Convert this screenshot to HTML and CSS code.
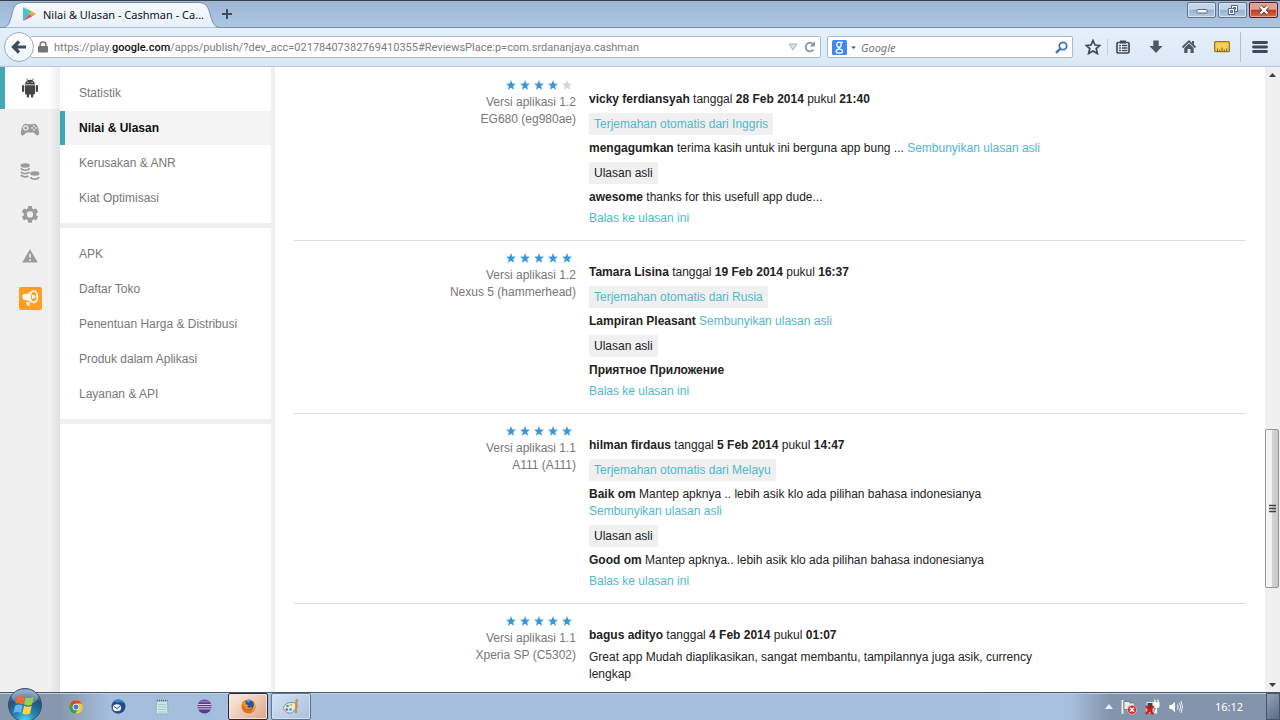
FILE: index.html
```html
<!DOCTYPE html>
<html lang="id">
<head>
<meta charset="utf-8">
<title>Nilai &amp; Ulasan - Cashman</title>
<link rel="stylesheet" href="styles.css">
</head>
<body>
<svg class="defs" aria-hidden="true">
  <defs>
    <symbol id="star" viewBox="0 0 10 10"><path d="M5 0 6.300 3.500 10 3.800 7.100 6.100 8.100 9.800 5 7.700 1.900 9.800 2.900 6.100 0 3.800 3.700 3.500z"/></symbol>
  </defs>
</svg>

<header class="titlebar">
  <div class="tab">
    <svg class="tab-shape" viewBox="0 0 224 26" preserveAspectRatio="none" aria-hidden="true">
      <defs><linearGradient id="tabfill" x1="0" y1="0" x2="0" y2="1"><stop offset="0" stop-color="#f6faff"/><stop offset="1" stop-color="#e6f0fb"/></linearGradient></defs>
      <path d="M0 26C9 26 10 20 12 12 14 4 16 .5 24 .5H200C208 .5 210 5 212 12 214 20 216 26 224 26z" fill="url(#tabfill)" stroke="#738eaf"/>
    </svg>
    <svg class="tab-icon" width="14" height="14" viewBox="0 0 14 14" aria-hidden="true"><path d="M1 0v14l6.500-7z" fill="#3fc3d8"/><path d="M1 0l9 4.600-2.500 2.400z" fill="#5ec07c"/><path d="M1 14l9-4.600L7.500 7z" fill="#e8435a"/><path d="M10 4.600 14 7l-4 2.400L7.500 7z" fill="#f3a33c"/></svg>
    <span class="tab-title">Nilai &amp; Ulasan - Cashman - Ca...</span>
  </div>
  <button class="new-tab" aria-label="New tab"><svg width="10" height="10" viewBox="0 0 10 10"><path d="M5 0v10M0 5h10" stroke="#3e4b5b" stroke-width="2"/></svg></button>
  <div class="window-buttons">
    <button class="win" aria-label="Minimize"><svg width="14" height="12" viewBox="0 0 14 12"><rect x="2" y="5.500" width="10" height="3.500" rx=".5" fill="#fff" stroke="#56657c"/></svg></button>
    <button class="win" aria-label="Restore"><svg width="14" height="12" viewBox="0 0 14 12"><g fill="#fff" stroke="#56657c"><path d="M5.500 1.500h6v6h-6z"/><path d="M7.500 3.500h2v2h-2z" fill="#8fa9c8"/><path d="M2.500 4.500h6v6h-6z"/><path d="M4.500 6.500h2v2h-2z" fill="#8fa9c8"/></g></svg></button>
    <button class="win win-close" aria-label="Close"><svg width="14" height="12" viewBox="0 0 14 12"><path d="M3.500 2.500l7 7M10.500 2.500l-7 7" stroke="#6b3a3c" stroke-width="4.200"/><path d="M3.500 2.500l7 7M10.500 2.500l-7 7" stroke="#fff" stroke-width="2.400"/></svg></button>
  </div>
</header>

<div class="toolbar">
  <button class="back" aria-label="Back"><svg width="16" height="14" viewBox="0 0 16 14"><path d="M8 1.500 2.500 7 8 12.500M3 7h12" fill="none" stroke="#3e4b5b" stroke-width="3.200"/></svg></button>
  <div class="url-box">
    <svg width="10" height="12" viewBox="0 0 10 12" aria-hidden="true"><path d="M2.200 6V3.500a2.800 2.500 0 0 1 5.600 0V6" fill="none" stroke="#7b7b7b" stroke-width="1.600"/><rect y="5" width="10" height="6.500" rx="1" fill="#757575"/></svg>
    <div class="url" role="textbox" contenteditable="true" spellcheck="false" aria-label="Address">https://play.<b>google.com</b>/apps/publish/?dev_acc=02178407382769410355#ReviewsPlace:p=com.srdananjaya.cashman</div>
    <button class="plain" aria-label="Show history"><svg width="10" height="8" viewBox="0 0 10 8"><path d="M1 1h8L5 7z" fill="#dde2e7" stroke="#a9b2bb"/></svg></button>
    <button class="plain" aria-label="Reload"><svg width="12" height="12" viewBox="0 0 12 12"><path d="M9.500 8.500A4.300 4.300 0 1 1 9 3" fill="none" stroke="#8f9aa5" stroke-width="1.800"/><path d="M11 0v5.500H5.800z" fill="#8f9aa5"/></svg></button>
  </div>
  <div class="search-box">
    <button class="plain" aria-label="Search engine"><svg width="24" height="15" viewBox="0 0 24 15"><rect width="15" height="15" rx="1.500" fill="#4285f4"/><g fill="none" stroke="#fff" stroke-width="1.300"><ellipse cx="7" cy="4.700" rx="2.200" ry="2.500"/><path d="M8 2.400h3M8.500 7C5.500 8 7 8.700 8.800 9.500M7.200 9.200c-4 .2-4.200 4 .2 4 4 0 4-2.800 1.400-3.800"/></g><path d="M19 6.500h5l-2.500 2.500z" fill="#555"/></svg></button>
    <input class="search-input" type="text" placeholder="Google" aria-label="Search">
    <button class="plain" aria-label="Search"><svg width="13" height="13" viewBox="0 0 13 13"><circle cx="8" cy="5" r="3.700" fill="none" stroke="#3c76b4" stroke-width="1.800"/><path d="M5.300 7.700 1 12" stroke="#3c76b4" stroke-width="2.400"/></svg></button>
  </div>
  <div class="tools">
    <button class="plain tool" aria-label="Bookmark"><svg width="16" height="16" viewBox="0 0 16 16"><path d="M8 1.500 10 6l4.800.4-3.600 3.200 1.200 4.900L8 11.900l-4.400 2.600 1.200-4.900L1.200 6.400 6 6z" fill="none" stroke="#3f4a58" stroke-width="1.700"/></svg></button>
    <span class="sep-small"></span>
    <button class="plain tool" aria-label="Bookmarks list"><svg width="16" height="16" viewBox="0 0 16 16"><rect x="2" y="3.500" width="12" height="10.500" rx="1.200" fill="#fff" stroke="#3f4a58" stroke-width="1.700"/><path d="M5 1.500h6v3H5z" fill="#3f4a58"/><path d="M4 6.500h2M7 6.500h5.500M4 9h2M7 9h5.500M4 11.500h2M7 11.500h5.500" stroke="#3f4a58" stroke-width="1.300"/></svg></button>
    <button class="plain tool" aria-label="Downloads"><svg width="16" height="16" viewBox="0 0 16 16"><path d="M5.300 1.500h5.400V7H14.500L8 14 1.500 7h3.800z" fill="#4c5764"/></svg></button>
    <button class="plain tool" aria-label="Home"><svg width="16" height="16" viewBox="0 0 16 16"><path d="M1.500 8.500 8 2.200l6.500 6.300" fill="none" stroke="#4c5764" stroke-width="1.800"/><path d="M3.300 9 8 4.500 12.700 9v5H9.500v-4h-3v4H3.300zM11 2h2v4l-2-2z" fill="#4c5764"/></svg></button>
    <button class="plain tool" aria-label="Measure"><svg width="16" height="16" viewBox="0 0 16 16"><rect x=".7" y="2.700" width="14.600" height="10" rx="1" fill="#f6cf58" stroke="#9a7420" stroke-width="1.300"/><path d="M3.500 12.500v-3M5.800 12.500v-2M8 12.500v-4M10.300 12.500v-2M12.600 12.500v-3" stroke="#84621a"/></svg></button>
    <span class="sep-tall"></span>
    <button class="plain tool" aria-label="Menu"><svg width="16" height="14" viewBox="0 0 16 14"><path d="M1.500 2.500h13M1.500 7h13M1.500 11.500h13" stroke="#3f4a58" stroke-width="2.800" stroke-linecap="round"/></svg></button>
  </div>
</div>

<div class="page">
  <nav class="rail" aria-label="Konsol">
    <a class="rail-item rail-active" href="#" aria-label="Aplikasi"><svg width="16" height="20" viewBox="0 0 16 20"><g fill="#454545"><path d="M3 6.500a5 4.700 0 0 1 10 0zM3 7.200h10v8.300a1 1 0 0 1-1 1H4a1 1 0 0 1-1-1z"/><rect y="7" width="2.200" height="7" rx="1.100"/><rect x="13.800" y="7" width="2.200" height="7" rx="1.100"/><rect x="4.700" y="14" width="2.400" height="5.500" rx="1"/><rect x="8.900" y="14" width="2.400" height="5.500" rx="1"/></g><path d="M4.500.5l1.300 2M11.500.5l-1.300 2" stroke="#454545" stroke-width=".8"/><circle cx="6" cy="4.500" r=".6" fill="#fff"/><circle cx="10" cy="4.500" r=".6" fill="#fff"/></svg></a>
    <a class="rail-item" href="#" aria-label="Game"><svg width="20" height="14" viewBox="0 0 20 14"><path d="M5 .8C6.500.3 7 1.300 8 1.300h4c1 0 1.500-1 3-.5 2.500.8 3.800 5.500 4.200 9 .3 2.700-2 3.500-3.300 2L13.500 9.500h-7L4.100 11.800c-1.300 1.500-3.600.7-3.300-2C1.200 6.300 2.500 1.600 5 .8z" fill="#9b9b9b"/><circle cx="5.800" cy="5" r="2.100" fill="#9b9b9b" stroke="#f0f0f0" stroke-width="1.200"/><g fill="#f0f0f0"><circle cx="14" cy="2.900" r=".9"/><circle cx="14" cy="6.800" r=".9"/><circle cx="12.100" cy="4.900" r=".9"/><circle cx="15.900" cy="4.900" r=".9"/></g></svg></a>
    <a class="rail-item" href="#" aria-label="Keuangan"><svg width="20" height="18" viewBox="0 0 20 18"><g fill="#9b9b9b"><ellipse cx="5.200" cy="2.500" rx="4.600" ry="2.200"/><ellipse cx="14.800" cy="10.500" rx="4.600" ry="2.200"/></g><g fill="none" stroke="#9b9b9b" stroke-width="1.700"><path d="M1 5.300c1 2.600 7.400 2.600 8.400 0M1 8.700c1 2.600 7.400 2.600 8.400 0M1 12c1 2 5.500 2.400 7.400 1M10.600 14c1 2.800 7.400 2.800 8.400 0"/></g></svg></a>
    <a class="rail-item" href="#" aria-label="Setelan"><svg width="18" height="18" viewBox="0 0 23 23"><path fill="#9b9b9b" d="M19.400 13a7.800 7.800 0 0 0 0-2l2.300-1.700a.6.600 0 0 0 .1-.7l-2.200-3.700a.6.600 0 0 0-.7-.3l-2.600 1.100a8 8 0 0 0-1.800-1L14 1.900a.6.600 0 0 0-.5-.5h-4a.6.600 0 0 0-.5.500l-.5 2.800a8 8 0 0 0-1.800 1L4.100 4.600a.6.600 0 0 0-.7.300L1.300 8.600a.6.600 0 0 0 .1.700L3.700 11a7.800 7.800 0 0 0 0 2l-2.300 1.700a.6.600 0 0 0-.1.700l2.100 3.700c.1.300.4.400.7.300l2.600-1.100a8 8 0 0 0 1.800 1l.5 2.800c0 .3.200.5.500.5h4c.3 0 .5-.2.500-.5l.5-2.800a8 8 0 0 0 1.800-1l2.600 1.100c.3.100.6 0 .7-.3l2.200-3.700a.6.600 0 0 0-.1-.7zM11.500 16a4 4 0 1 1 0-8 4 4 0 0 1 0 8z"/></svg></a>
    <a class="rail-item" href="#" aria-label="Peringatan"><svg width="16" height="14" viewBox="0 0 16 14"><path d="M8 .2 15.800 13.500H.2z" fill="#9b9b9b"/><path d="M8 4.800v4M8 10.200v1.800" stroke="#f0f0f0" stroke-width="1.600"/></svg></a>
    <a class="rail-item" href="#" aria-label="Pengumuman"><svg width="23" height="23" viewBox="0 0 23 23"><rect width="23" height="23" rx="2" fill="#ff9d25"/><path d="M3.500 8.500C3.500 7 5 7 8 7l5-3.200v12L8 13H5c-1.500-.5-1.500-3-1.500-4.500zM7 14.500l4 1-.5 3.500L8 18z" fill="#fff"/><ellipse cx="14.700" cy="9.800" rx="3.600" ry="5.600" fill="#ff9d25" stroke="#fff" stroke-width="1.800"/><path d="M13 8h1.500a1.800 1.800 0 0 1 0 3.600H13z" fill="#fff"/></svg></a>
  </nav>

  <nav class="menu" aria-label="Menu aplikasi">
    <div class="menu-group">
      <a class="menu-item" href="#">Statistik</a>
      <a class="menu-item menu-active" href="#">Nilai &amp; Ulasan</a>
      <a class="menu-item" href="#">Kerusakan &amp; ANR</a>
      <a class="menu-item" href="#">Kiat Optimisasi</a>
    </div>
    <div class="menu-group">
      <a class="menu-item" href="#">APK</a>
      <a class="menu-item" href="#">Daftar Toko</a>
      <a class="menu-item" href="#">Penentuan Harga &amp; Distribusi</a>
      <a class="menu-item" href="#">Produk dalam Aplikasi</a>
      <a class="menu-item" href="#">Layanan &amp; API</a>
    </div>
  </nav>

  <main class="reviews">
    <article class="review">
      <div class="meta">
        <div class="stars" role="img" aria-label="4 dari 5"><svg><use href="#star"/></svg><svg><use href="#star"/></svg><svg><use href="#star"/></svg><svg><use href="#star"/></svg><svg class="off"><use href="#star"/></svg></div>
        <div>Versi aplikasi 1.2</div>
        <div>EG680 (eg980ae)</div>
      </div>
      <div class="body">
        <p><b>vicky ferdiansyah</b> tanggal <b>28 Feb 2014</b> pukul <b>21:40</b></p>
        <a class="tag" href="#">Terjemahan otomatis dari Inggris</a>
        <p><b>mengagumkan</b> terima kasih untuk ini berguna app bung ... <a class="toggle" href="#">Sembunyikan ulasan asli</a></p>
        <span class="tag">Ulasan asli</span>
        <p><b>awesome</b> thanks for this usefull app dude...</p>
        <a class="reply" href="#">Balas ke ulasan ini</a>
      </div>
    </article>
    <article class="review">
      <div class="meta">
        <div class="stars" role="img" aria-label="5 dari 5"><svg><use href="#star"/></svg><svg><use href="#star"/></svg><svg><use href="#star"/></svg><svg><use href="#star"/></svg><svg><use href="#star"/></svg></div>
        <div>Versi aplikasi 1.2</div>
        <div>Nexus 5 (hammerhead)</div>
      </div>
      <div class="body">
        <p><b>Tamara Lisina</b> tanggal <b>19 Feb 2014</b> pukul <b>16:37</b></p>
        <a class="tag" href="#">Terjemahan otomatis dari Rusia</a>
        <p><b>Lampiran Pleasant</b> <a class="toggle" href="#">Sembunyikan ulasan asli</a></p>
        <span class="tag">Ulasan asli</span>
        <p><b>Приятное Приложение</b></p>
        <a class="reply" href="#">Balas ke ulasan ini</a>
      </div>
    </article>
    <article class="review">
      <div class="meta">
        <div class="stars" role="img" aria-label="5 dari 5"><svg><use href="#star"/></svg><svg><use href="#star"/></svg><svg><use href="#star"/></svg><svg><use href="#star"/></svg><svg><use href="#star"/></svg></div>
        <div>Versi aplikasi 1.1</div>
        <div>A111 (A111)</div>
      </div>
      <div class="body">
        <p><b>hilman firdaus</b> tanggal <b>5 Feb 2014</b> pukul <b>14:47</b></p>
        <a class="tag" href="#">Terjemahan otomatis dari Melayu</a>
        <p><b>Baik om</b> Mantep apknya .. lebih asik klo ada pilihan bahasa indonesianya <a class="toggle" href="#">Sembunyikan ulasan asli</a></p>
        <span class="tag">Ulasan asli</span>
        <p><b>Good om</b> Mantep apknya.. lebih asik klo ada pilihan bahasa indonesianya</p>
        <a class="reply" href="#">Balas ke ulasan ini</a>
      </div>
    </article>
    <article class="review">
      <div class="meta">
        <div class="stars" role="img" aria-label="5 dari 5"><svg><use href="#star"/></svg><svg><use href="#star"/></svg><svg><use href="#star"/></svg><svg><use href="#star"/></svg><svg><use href="#star"/></svg></div>
        <div>Versi aplikasi 1.1</div>
        <div>Xperia SP (C5302)</div>
      </div>
      <div class="body">
        <p><b>bagus adityo</b> tanggal <b>4 Feb 2014</b> pukul <b>01:07</b></p>
        <p>Great app Mudah diaplikasikan, sangat membantu, tampilannya juga asik, currency lengkap</p>
      </div>
    </article>
  </main>

  <div class="scrollbar">
    <button class="scroll-btn" aria-label="Scroll up"><svg width="7" height="4" viewBox="0 0 7 4"><path d="M0 4 3.500 0 7 4z" fill="#404040"/></svg></button>
    <span class="space-above"></span>
    <span class="thumb"><svg width="7" height="9" viewBox="0 0 7 9"><path d="M0 1.500h7M0 4.500h7M0 7.500h7" stroke="#444" stroke-width="1.400"/></svg></span>
    <span class="space-below"></span>
    <button class="scroll-btn" aria-label="Scroll down"><svg width="7" height="4" viewBox="0 0 7 4"><path d="M0 0h7L3.500 4z" fill="#404040"/></svg></button>
  </div>
</div>

<footer class="taskbar">
  <button class="start" aria-label="Start"><svg width="36" height="34" viewBox="0 0 36 34">
    <defs><radialGradient id="orb" cx=".5" cy="1" r=".95"><stop offset="0" stop-color="#4fe0f4"/><stop offset=".35" stop-color="#2489b8"/><stop offset=".75" stop-color="#24507c"/><stop offset="1" stop-color="#6f93b3"/></radialGradient></defs>
    <circle cx="18" cy="17" r="16.500" fill="url(#orb)" stroke="#34506d"/><ellipse cx="18" cy="9" rx="13" ry="7.500" fill="#fff" opacity=".3"/>
    <path d="M10 9c3-1.800 5-1.600 7.500-.3L16 16c-2.500-1.300-5-1.300-7.500 0z" fill="#f06a35"/><path d="M18.700 9.200c2.800 1.300 5 1 8-.3L25 16.500c-2.800 1.300-5 1.200-7.700 0z" fill="#9ccc48"/><path d="M8.200 17.500c2.700-1.300 5-1.200 7.500 0L14 25c-2.500-1.300-4.800-1.300-7.500 0z" fill="#67b5ef"/><path d="M17 17.700c2.700 1.300 5 1.200 7.700.2L23 25.500c-2.700 1.200-5 1.200-7.700 0z" fill="#ffd24b"/>
  </svg></button>
  <div class="launchers">
    <button class="plain launch" aria-label="Chrome"><svg width="14" height="14" viewBox="0 0 14 14"><circle cx="7" cy="7" r="6.800" fill="#f8ca33"/><path d="M1.100 3.600A6.800 6.800 0 0 1 12.900 3.600H7L4 8.500z" fill="#dc4437"/><path d="M1.100 3.600A6.800 6.800 0 0 0 6.300 13.800L9.600 8.500H4z" fill="#2fa352"/><circle cx="7" cy="7" r="3.300" fill="#fff"/><circle cx="7" cy="7" r="2.500" fill="#3d7de0"/></svg></button>
    <button class="plain launch" aria-label="Thunderbird"><svg width="15" height="15" viewBox="0 0 15 15"><circle cx="7.500" cy="7.500" r="7" fill="#244b83"/><path d="M2 2.500C6-1 12 .5 14 5c-3-2.500-5-2-7-1.500z" fill="#3f86c6"/><ellipse cx="6" cy="8.800" rx="4.200" ry="3.500" fill="#eef2f6"/><path d="M3 7.500l3 2 3.500-2.700M1 10c1 4 6 5 9 3" fill="none" stroke="#35537b"/></svg></button>
    <button class="plain launch" aria-label="Notepad"><svg width="14" height="16" viewBox="0 0 14 16"><path d="M1.500 2h11l.5 13H1z" fill="#c6e8ea" stroke="#8fabac" stroke-width=".8"/><path d="M2 1.500h10.500" stroke="#526c70" stroke-width="1.600" stroke-dasharray="1 1"/><path d="M3 5.500h8M3 8h8M3 10.500h8M3 13h8" stroke="#98c6cc" stroke-width=".8"/></svg></button>
    <button class="plain launch" aria-label="Eclipse"><svg width="15" height="15" viewBox="0 0 15 15"><circle cx="7.500" cy="7.500" r="7" fill="#5b3c86"/><path d="M.8 5.500h13.400M.5 7.700h14M.8 9.900h13.400" stroke="#d9cdea" stroke-width="1"/><path d="M2 3.500c3-3 8-3 11 0z" fill="#8d72b4"/></svg></button>
    <div class="tasks">
      <button class="task task-active" aria-label="Firefox"><svg width="15" height="15" viewBox="0 0 15 15"><circle cx="7.500" cy="7.500" r="7" fill="#e66b1d"/><circle cx="7.800" cy="6" r="5" fill="#23549c"/><path d="M5 2c1-1.500 4-2 6-.5-2 0-3 1-3 2z" fill="#53a5dc"/><path d="M1 4c.5-1 1-2 1.800-2.500.2 1 1 1.500 2.200 1.500L4.500 5l3 1.200C6 7 6 8 7 8.500c2 .8 3-1 4.500 0C10 11 5.500 11.500 3.500 8.500z" fill="#f6921e"/><path d="M13 3.500c2 4 0 8-3 9.500 2-2.500 3-4 3-9.500z" fill="#fbc638"/></svg></button>
      <button class="task" aria-label="Paint"><svg width="16" height="16" viewBox="0 0 16 16"><path d="M2 6c3-3.500 10-3.500 12 0 1 4-3 4-3.500 6S7 15 3.500 13 0 8 2 6z" fill="#d9edf7" stroke="#5794b9" stroke-width=".9"/><circle cx="4.500" cy="7" r="1.300" fill="#46a84f"/><circle cx="8" cy="5.700" r="1.300" fill="#e7bf30"/><circle cx="3.800" cy="10.500" r="1.300" fill="#d9463b"/><circle cx="7.500" cy="10.500" r="1.500" fill="#5fa1d4"/><path d="M13.500 1.500 12.800 14" stroke="#df8a25" stroke-width="2.200"/><path d="M12.700 0h2.300v3.500h-2.300z" fill="#c69a5e"/></svg></button>
    </div>
  </div>
  <div class="tray">
    <button class="plain" aria-label="Show hidden icons"><svg width="8" height="5" viewBox="0 0 8 5"><path d="M0 5 4 0l4 5z" fill="#edf2f8"/></svg></button>
    <button class="plain" aria-label="Action Center"><svg width="16" height="16" viewBox="0 0 16 16"><path d="M1.500 1v14" stroke="#f4f4f4" stroke-width="1.800"/><path d="M3 2.500h5l1 1.500h4.500v6.500H3z" fill="#e8ecef" stroke="#5a6878" stroke-width=".7"/><circle cx="11" cy="10.800" r="4.600" fill="#d92f2c" stroke="#f2dada" stroke-width=".6"/><path d="M9 8.800l4 4M13 8.800l-4 4" stroke="#fff" stroke-width="1.500"/></svg></button>
    <button class="plain" aria-label="Battery"><svg width="15" height="16" viewBox="0 0 15 16"><path d="M2 3.500h6v10H2z" fill="#4b3e47" stroke="#eee"/><path d="M10 .5v3M13 .5v3" stroke="#fff" stroke-width="1.300"/><path d="M8.500 3.500H14V7c0 2-5.500 2-5.500 0zM11.500 8v6H9" fill="#fff" stroke="#eee" stroke-width="1.200"/><path d="M1 7l7 8M8.500 7 1 15" stroke="#e21414" stroke-width="2.400"/></svg></button>
    <button class="plain" aria-label="Volume"><svg width="15" height="14" viewBox="0 0 15 14"><path d="M.8 4.500h2.700L7.500.8v12.400L3.500 9.500H.8z" fill="#f5f7f9" stroke="#65738a" stroke-width=".6"/><path d="M9.300 4.500q1.600 2.500 0 5M11.300 2.700q2.700 4.300 0 8.600M13 1q3 6 0 12" fill="none" stroke="#f0f3f7"/></svg></button>
    <time class="clock">16:12</time>
    <button class="show-desktop" aria-label="Show desktop"></button>
  </div>
</footer>
</body>
</html>
```
FILE: styles.css
```css
* { box-sizing: border-box; }

body {
  margin: 0;
  height: 100vh;
  display: flex;
  flex-direction: column;
  overflow: hidden;
  font-family: "Liberation Sans", Arial, sans-serif;
  font-size: 12px;
  line-height: 17px;
  color: #222;
  background: #fff;
}

button { font: inherit; padding: 0; margin: 0; }
svg { display: block; flex: none; }
a { color: #4fb8ca; text-decoration: none; }
p { margin: 0; }
.defs { position: absolute; width: 0; height: 0; }

.plain {
  display: flex;
  align-items: center;
  justify-content: center;
  border: 0;
  background: none;
}

/* Window title bar */
.titlebar {
  flex: none;
  display: flex;
  height: 28px;
  border-top: 1px solid #3a3f48;
  border-bottom: 1px solid #738eaf;
  background: linear-gradient(#9bb6d5, #aec6e1);
  font-family: "Noto Sans", "Open Sans", sans-serif;
}
.tab {
  position: relative;
  display: flex;
  align-items: center;
  gap: 7px;
  width: 222px;
  padding-left: 22px;
  color: #111;
  font-size: 11px;
}
.tab-shape {
  position: absolute;
  left: 0;
  top: 1px;
  width: 100%;
  height: 26px;
}
.tab-icon, .tab-title { position: relative; white-space: nowrap; }
.new-tab {
  display: flex;
  align-items: center;
  border: 0;
  background: none;
}
.window-buttons {
  display: flex;
  align-items: flex-start;
  gap: 2px;
  margin-left: auto;
  padding: 1px 2px 0 0;
}
.win {
  display: flex;
  align-items: center;
  justify-content: center;
  width: 29px;
  height: 16px;
  border: 1px solid #5d738f;
  border-radius: 2px;
  background: linear-gradient(#c4d5e9 45%, #96b2d1 50%, #b5cbe4);
  box-shadow: inset 0 0 0 1px #d6e3f1;
}
.win-close {
  border-color: #5b2026;
  background: linear-gradient(#e0a093 45%, #bf3a22 50%, #cf6a50);
  box-shadow: inset 0 0 0 1px #e5a79b;
}

/* Navigation toolbar */
.toolbar {
  flex: none;
  display: flex;
  align-items: center;
  height: 39px;
  padding: 0 4px;
  border-bottom: 1px solid #b6c8dc;
  background: linear-gradient(#e6f0fb, #dae8f6);
}
.back {
  z-index: 1;
  display: flex;
  align-items: center;
  justify-content: center;
  width: 30px;
  height: 30px;
  border: 1px solid #9aabbd;
  border-radius: 50%;
  background: linear-gradient(#fff, #eef5fc);
}
.url-box, .search-box {
  display: flex;
  align-items: center;
  height: 22px;
  border: 1px solid #a9bacb;
  border-radius: 2px;
  background: #fff;
}
.url-box {
  flex: 1;
  min-width: 0;
  margin-left: -4px;
  padding: 0 4px 0 7px;
  gap: 6px;
}
.url {
  flex: 1;
  min-width: 0;
  overflow: hidden;
  white-space: nowrap;
  color: #7b7b7b;
  font-family: Roboto, "Open Sans", sans-serif;
  font-size: 11px;
  outline: 0;
}
.url b { color: #111; font-weight: 500; }
.search-box {
  width: 246px;
  margin-left: 6px;
  padding: 0 4px;
  gap: 5px;
}
.search-input {
  flex: 1;
  min-width: 0;
  padding: 0;
  border: 0;
  outline: 0;
  font: italic 11px "Noto Sans", "Open Sans", sans-serif;
}
.search-input::placeholder { color: #777; }
.tools {
  display: flex;
  align-items: center;
  padding-left: 3px;
}
.tool { width: 33px; height: 24px; }
.sep-small { width: 1px; height: 16px; margin: 0 -2px; background: #c0cddb; }
.sep-tall { width: 1px; height: 30px; margin: 0 2px; background: #aebfd1; }

/* Page */
.page {
  flex: 1;
  min-height: 0;
  display: flex;
  background: #f0f0f0;
}
.rail {
  flex: none;
  width: 60px;
  background: linear-gradient(90deg, #f0f0f0 50px, #dfdfdf);
}
.rail-item {
  display: flex;
  align-items: center;
  justify-content: center;
  height: 42px;
}
.rail-active {
  border-left: 5px solid #3fa9b5;
  padding-right: 5px;
  background: linear-gradient(90deg, #fff 44px, #ededed);
}
.menu {
  flex: none;
  display: flex;
  flex-direction: column;
  gap: 5px;
  width: 211px;
}
.menu::after { content: ""; flex: 1; background: #fff; }
.menu-group {
  display: flex;
  flex-direction: column;
  gap: 1px;
  padding: 9px 0 8px;
  background: #fff;
}
.menu-item {
  height: 34px;
  padding-left: 19px;
  line-height: 34px;
  color: #777;
}
.menu-active {
  padding-left: 14px;
  border-left: 5px solid #3fa9b5;
  background: #f4f4f4;
  color: #111;
  font-weight: bold;
}

.reviews {
  flex: 1;
  min-width: 0;
  overflow: hidden;
  margin-left: 4px;
  padding: 1px 20px 0 19px;
  background: #fff;
}
.review {
  display: grid;
  grid-template-columns: 282px minmax(0, 474px);
  column-gap: 13px;
  border-bottom: 1px solid #ddd;
}
.meta { padding-top: 9px; text-align: right; color: #777; }
.stars {
  display: flex;
  align-items: center;
  justify-content: flex-end;
  gap: 4px;
  height: 17px;
  padding: 0 4px 2px 0;
}
.stars svg { width: 10px; height: 10px; fill: #3b97dc; }
.stars .off { fill: #d3d3d3; }
.body {
  display: flex;
  flex-direction: column;
  align-items: flex-start;
  gap: 5px;
  padding: 23px 0 13px;
}
.tag {
  height: 22px;
  padding: 0 5px;
  line-height: 22px;
  background: #f0f0f0;
}
.toggle { display: inline-block; }
.reply { margin-top: -1px; }

.scrollbar {
  flex: none;
  display: flex;
  flex-direction: column;
  width: 15px;
  background: #f0f0f0;
}
.scroll-btn {
  display: flex;
  align-items: center;
  justify-content: center;
  height: 15px;
  border: 0;
  background: none;
}
.space-above { flex: 349; }
.space-below { flex: 89; }
.thumb {
  flex: 158;
  display: flex;
  align-items: center;
  justify-content: center;
  margin-right: 1px;
  border: 1px solid #979797;
  border-radius: 2px;
  background: linear-gradient(90deg, #f5f5f5 45%, #d5d5d8 50%, #c8c8cc);
}

/* Taskbar */
.taskbar {
  flex: none;
  display: flex;
  align-items: stretch;
  height: 28px;
  border-top: 1px solid #46566b;
  background: linear-gradient(90deg, #8797ad 60px, #a5bedd 110px, #a8c0df calc(100% - 210px), #8395ad calc(100% - 170px));
  box-shadow: inset 0 1px #c3d3e6;
}
.start {
  display: flex;
  align-items: center;
  width: 36px;
  margin: -3px 11px 0 7px;
  border: 0;
  background: none;
}
.launchers { display: flex; align-items: stretch; }
.launch { width: 43px; }
.tasks { display: flex; gap: 3px; padding-left: 2px; }
.task {
  display: flex;
  align-items: center;
  justify-content: center;
  width: 40px;
  border: 1px solid #5d7595;
  border-radius: 2px;
  background: linear-gradient(135deg, #d5e2f1, #a9c1df);
  box-shadow: inset 0 0 0 1px #d4e1f0;
}
.task-active {
  border-color: #2a2a33;
  background: linear-gradient(135deg, #fbeee6, #dfa586);
  box-shadow: inset 0 0 0 1px #f7e3d8;
}
.tray {
  display: flex;
  align-items: stretch;
  gap: 8px;
  margin-left: auto;
  color: #fff;
  font: 11px/27px "Noto Sans", "Open Sans", sans-serif;
}
.clock { margin: 0 15px 0 24px; }
.show-desktop {
  width: 14px;
  border: 1px solid #46566b;
  background: linear-gradient(135deg, #93a3b8, #5b6b80);
}
```
